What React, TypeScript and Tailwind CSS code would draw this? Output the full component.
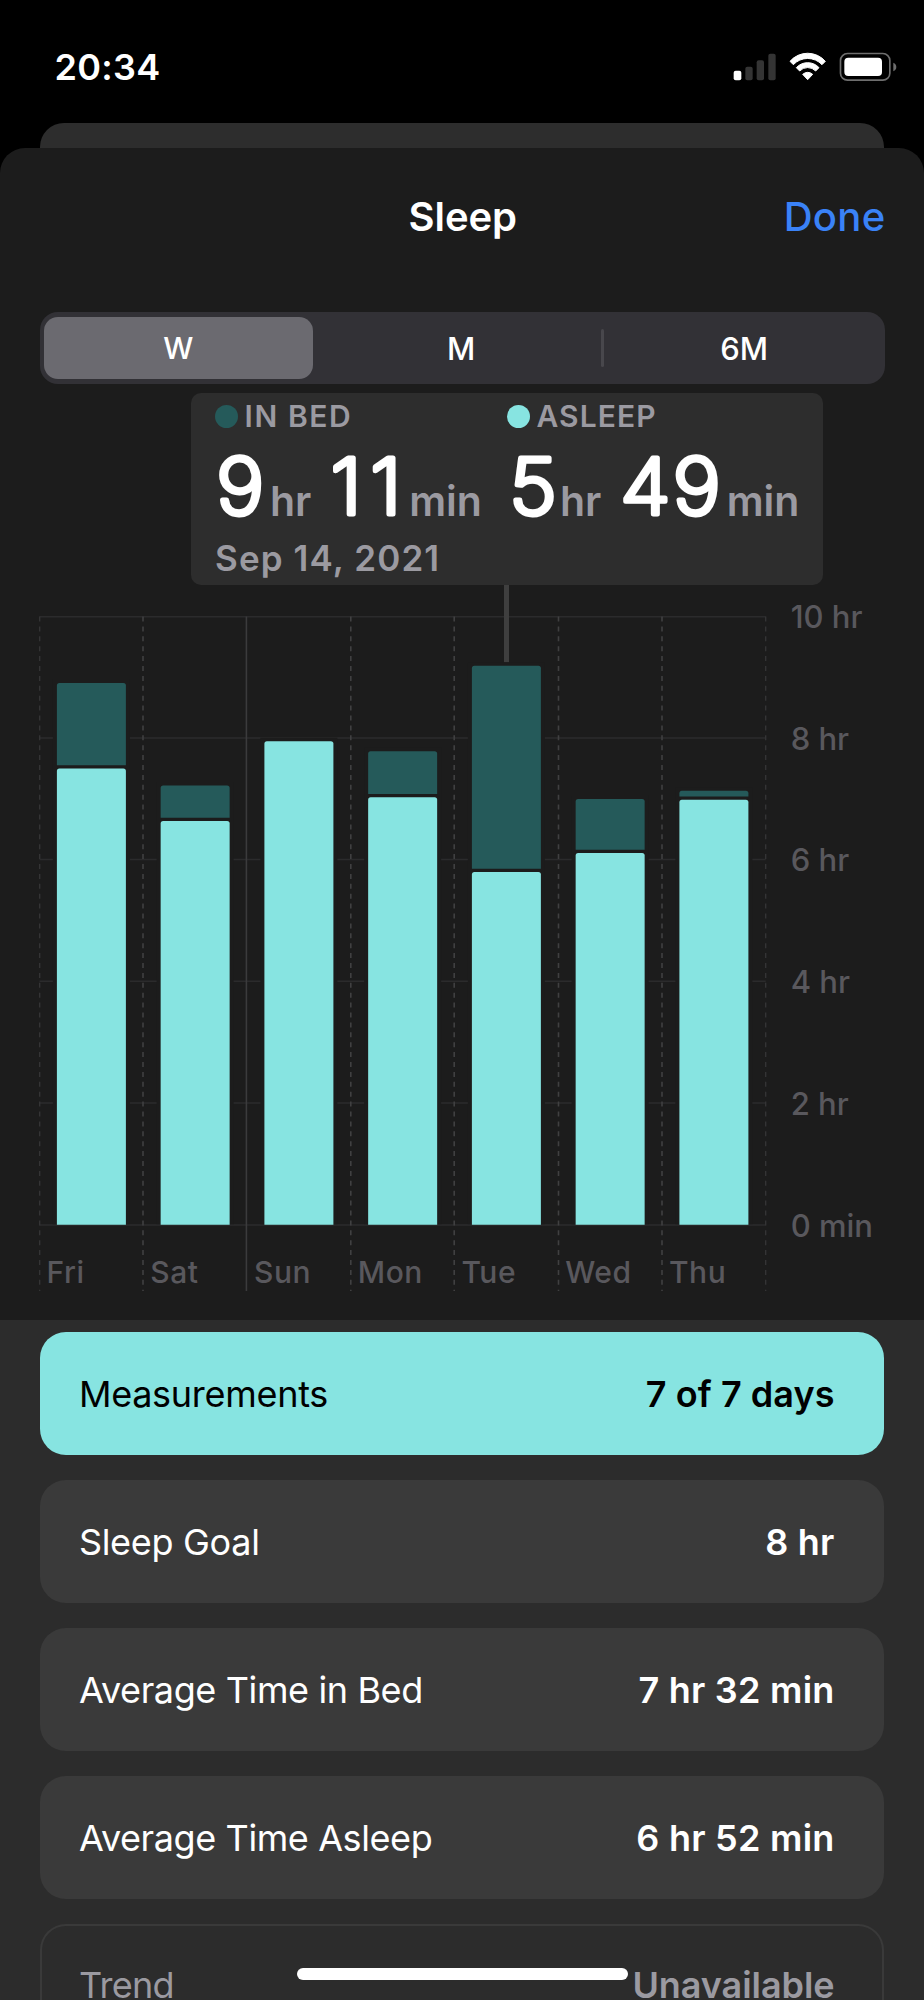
const PLOT_LEFT = 39.5;
const PLOT_RIGHT = 765.7;
const PLOT_BOTTOM = 1225;
const DAY_WIDTH = 103.67;

const hourLines = [
  { y: 616.7, label: "10 hr" },
  { y: 738, label: "8 hr" },
  { y: 859.5, label: "6 hr" },
  { y: 981.3, label: "4 hr" },
  { y: 1103, label: "2 hr" },
  { y: PLOT_BOTTOM, label: "0 min" },
];

const dayLines = [39.7, 143, 246.4, 350.8, 454.2, 558.5, 662, 765.7];

type Day = { name: string; bedTop?: number; asleepTop: number };

const days: Day[] = [
  { name: "Fri", bedTop: 683, asleepTop: 768.5 },
  { name: "Sat", bedTop: 785.5, asleepTop: 821 },
  { name: "Sun", asleepTop: 741.2 },
  { name: "Mon", bedTop: 751.3, asleepTop: 797.2 },
  { name: "Tue", bedTop: 665.8, asleepTop: 872 },
  { name: "Wed", bedTop: 799, asleepTop: 853 },
  { name: "Thu", bedTop: 790.8, asleepTop: 799.7 },
];

function topRounded(x: number, y: number, w: number, bottom: number, r = 2.5) {
  return `M${x} ${bottom}V${y + r}Q${x} ${y} ${x + r} ${y}H${x + w - r}Q${x + w} ${y} ${x + w} ${y + r}V${bottom}Z`;
}

function StatusBar() {
  return (
    <div className="flex h-[123px] items-center justify-between pt-[11px] pr-[27px] pl-[54.5px]">
      <span className="text-[36px] leading-none font-semibold tracking-[0.3px]">20:34</span>
      <svg width="164" height="30" viewBox="20 37 492 90" fill="white">
        <rect x="22" y="93" width="23" height="29" rx="6" />
        <g fill="#343434">
          <rect x="57" y="81" width="22" height="41" rx="6" />
          <rect x="91" y="62" width="22" height="60" rx="6" />
          <rect x="126" y="42" width="22" height="80" rx="6" />
        </g>
        <g stroke="white" strokeWidth="3" strokeLinejoin="round">
          <path d="M191 65A70 70 0 0 1 297 65L287 75A59 59 0 0 0 201 75Z" />
          <path d="M210 84A46 46 0 0 1 278 84L268 94A33 33 0 0 0 220 94Z" />
          <path d="M229 104Q244 92 259 104L244 120Z" />
        </g>
        <rect x="342.5" y="41.5" width="148" height="80" rx="21" fill="none" stroke="#6e6e6e" strokeWidth="5" />
        <rect x="354" y="54" width="113" height="55" rx="12" />
        <path d="M501 69Q510 73 510 82Q510 91 501 95Z" fill="#6e6e6e" />
      </svg>
    </div>
  );
}

function RangePicker() {
  return (
    <div className="ml-[39.6px] flex h-[72px] w-[845px] items-center rounded-[18px] bg-[#323136] pl-[4.5px] text-[31px] leading-none font-medium">
      <div className="mr-[9px] flex h-[62px] w-[268.5px] items-center justify-center rounded-[14px] bg-[#6b6a70]">
        <span className="text-[30px]">W</span>
      </div>
      <div className="flex w-[279px] items-center justify-center">M</div>
      <div className="h-[38px] w-[3px] rounded-full bg-[#48474c]" />
      <div className="flex w-[281px] items-center justify-center">6M</div>
    </div>
  );
}

function Digits({ value, xs, width }: { value: string; xs: string; width: number }) {
  return (
    <svg width={width} height="76" className="shrink-0 overflow-visible">
      <text
        x={xs}
        y="73.7"
        transform="scale(1.06 1)"
        strokeWidth="5"
        strokeLinejoin="round"
        className="fill-white stroke-white text-[77.5px] font-extralight"
      >
        {value}
      </text>
    </svg>
  );
}

function Unit({ children }: { children: string }) {
  return (
    <span className="text-[41px] leading-none font-semibold tracking-[-0.1px] text-[#9b9aa1]">{children}</span>
  );
}

function Selection() {
  return (
    <div className="mt-[8.5px] ml-[191px] h-[192.5px] w-[632px] rounded-[10px] bg-[#2d2d2d] pl-[24px] text-[#9b9aa1]">
      <div className="grid h-[47px] grid-cols-[291.5px_1fr] items-center text-[30px] leading-none font-semibold">
        <div className="flex items-center gap-[6.5px]">
          <i className="size-[23px] rounded-full bg-[#255a5a]" />
          <span className="tracking-[1.6px]">IN BED</span>
        </div>
        <div className="flex items-center gap-[7px]">
          <i className="size-[23px] rounded-full bg-[#87e4e1]" />
          <span className="tracking-[1.1px]">ASLEEP</span>
        </div>
      </div>
      <div className="grid h-[92px] grid-cols-[292px_1fr] whitespace-nowrap">
        <div className="flex items-baseline">
          <Digits value="9" xs="1.2" width={55} />
          <Unit>hr</Unit>
          <span className="w-[13.6px]" />
          <Digits value="11" xs="5.2 42.7" width={84.5} />
          <Unit>min</Unit>
        </div>
        <div className="flex items-baseline">
          <Digits value="5" xs="2.2" width={53} />
          <Unit>hr</Unit>
          <span className="w-[13.6px]" />
          <Digits value="49" xs="5 54.5" width={112} />
          <Unit>min</Unit>
        </div>
      </div>
      <div className="flex h-[54px] items-center text-[35px] leading-none font-semibold tracking-[1.12px]">
        Sep 14, 2021
      </div>
    </div>
  );
}

function SleepChart() {
  return (
    <svg width="924" height="735" viewBox="0 585 924 735" className="block text-[31px] font-medium">
      {hourLines.map(({ y }) => (
        <path key={y} d={`M${PLOT_LEFT} ${y}H${PLOT_RIGHT}`} stroke="#2b2b2c" strokeWidth="1.6" />
      ))}
      {dayLines.map((x, i) => {
        const solid = i === 2;
        return (
          <path
            key={x}
            d={`M${x} 616.5V1291`}
            stroke={solid ? "#3b3b3c" : i % 7 === 0 ? "#363637" : "#404041"}
            strokeWidth={i % 7 === 0 ? 1.3 : 1.6}
            strokeDasharray={solid ? undefined : "5 4.9"}
          />
        );
      })}
      <rect x="504" y="585" width="5" height="77.3" fill="#3f3f3f" />
      {days.map(({ name, bedTop, asleepTop }, i) => {
        const x = 56.9 + i * 103.75;
        const top = bedTop ?? asleepTop;
        return (
          <g key={name}>
            <rect x={x - 4} y={top - 3.5} width="77" height={PLOT_BOTTOM - top + 2.7} fill="#1c1c1c" />
            {bedTop !== undefined && <path d={topRounded(x, bedTop, 69, asleepTop - 3.3)} fill="#255a5a" />}
            <path d={topRounded(x, asleepTop, 69, PLOT_BOTTOM - 0.2)} fill="#87e4e1" />
            <text x={46.5 + i * 103.75} y="1283" className="fill-[#59585d] text-[30px] tracking-[0.5px]">
              {name}
            </text>
          </g>
        );
      })}
      {hourLines.map(({ y, label }) => (
        <text key={label} x="790.7" y={y + 11.5} className="fill-[#59585d]">
          {label}
        </text>
      ))}
    </svg>
  );
}

type CardProps = { label: string; value: string; tone: string; labelFit: string; valueFit: string };

function Card({ label, value, tone, labelFit, valueFit }: CardProps) {
  return (
    <div
      className={`flex h-[123px] shrink-0 items-center justify-between rounded-[26px] pr-[49.8px] pl-[39.3px] text-[36px] leading-none ${tone}`}
    >
      <span className={labelFit}>{label}</span>
      <span className={`font-semibold ${valueFit}`}>{value}</span>
    </div>
  );
}

export default function App() {
  return (
    <div className="relative h-[2000px] w-[924px] overflow-hidden bg-black font-['Inter',sans-serif] text-white">
      <StatusBar />
      <div className="mx-[40px] h-[25px] rounded-t-[24px] bg-[#2d2d2d]" />
      <main className="rounded-t-[25px] bg-[#1c1c1c]">
        <header className="mb-[26.5px] grid h-[137.5px] grid-cols-[1fr_auto_1fr] items-center pr-[38.5px] pl-[40px] text-[40px] leading-none">
          <span />
          <h1 className="font-semibold tracking-[-0.1px]">Sleep</h1>
          <button className="justify-self-end font-medium tracking-[0.3px] text-[#3a82f7]">Done</button>
        </header>
        <RangePicker />
        <Selection />
        <SleepChart />
      </main>
      <section className="flex h-[680px] flex-col gap-[24.9px] bg-[#2c2c2c] px-[39.6px] pt-[12.4px]">
        <Card
          label="Measurements"
          value="7 of 7 days"
          tone="bg-[#87e4e1] text-black"
          labelFit="tracking-[-0.28px]"
          valueFit="tracking-[0.07px]"
        />
        <Card
          label="Sleep Goal"
          value="8 hr"
          tone="bg-[#3a3a3a]"
          labelFit="tracking-[-0.3px]"
          valueFit="tracking-[0.2px]"
        />
        <Card
          label="Average Time in Bed"
          value="7 hr 32 min"
          tone="bg-[#3a3a3a]"
          labelFit="tracking-[-0.38px]"
          valueFit="tracking-[0.25px]"
        />
        <Card
          label="Average Time Asleep"
          value="6 hr 52 min"
          tone="bg-[#3a3a3a]"
          labelFit="tracking-[-0.4px]"
          valueFit="tracking-[0.25px]"
        />
        <Card
          label="Trend"
          value="Unavailable"
          tone="text-[#9b9aa1] shadow-[inset_0_0_0_2px_#3a3a3a]"
          labelFit="tracking-[-0.7px]"
          valueFit="tracking-[-0.05px]"
        />
      </section>
      <div className="absolute top-[1968px] left-[297px] h-[12px] w-[331px] rounded-full bg-white" />
    </div>
  );
}
